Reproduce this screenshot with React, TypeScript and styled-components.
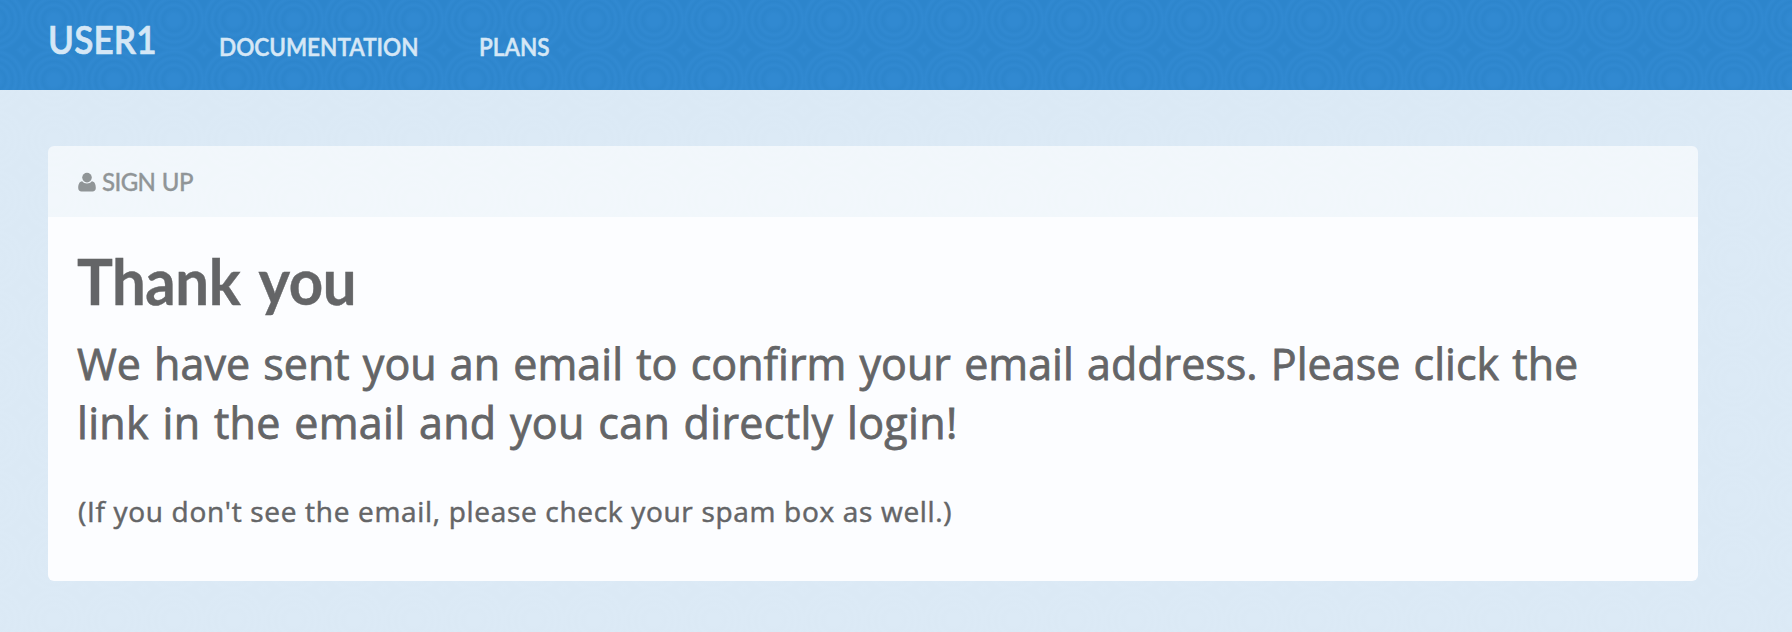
import React from "react";
import styled, { createGlobalStyle } from "styled-components";

const rings = (dark: string, light: string) =>
  `radial-gradient(circle at 30px 30px, ${light} 0 6px, ${dark} 11.5px, ${light} 15px, ${dark} 18.5px, ${light} 22px, ${dark} 25px, ${light} 28.5px, ${dark} 32px, ${dark} 36px, ${light} 39.5px, ${dark} 42.4px)`;

const GlobalStyle = createGlobalStyle`
  *, *::before, *::after { box-sizing: border-box; }
  body { margin: 0; }
`;

const Page = styled.div`
  min-height: 632px;
  background: ${rings("#dbe9f5", "#dceaf6")} 24px 50px / 60px 60px;
  color: #646567;
  font-family: "Open Sans", "Noto Sans", sans-serif;
`;

const Header = styled.header`
  height: 90px;
  padding-left: 48px;
  display: flex;
  align-items: flex-start;
  background: ${rings("#2d85cc", "#3189d1")} 24px 50px / 60px 60px;
  color: #d5e7f6;
  font-family: Lato, sans-serif;
  white-space: nowrap;
`;

const Brand = styled.a`
  width: 171px;
  font-size: 39px;
  font-weight: 600;
  line-height: 79px;
  letter-spacing: 0.2px;
  transform: scaleX(0.9);
  transform-origin: left;
  -webkit-text-stroke: 0.7px currentColor;
`;

const NavLink = styled.a<{ $width: number }>`
  width: ${(p) => p.$width}px;
  font-size: 24px;
  font-weight: 600;
  line-height: 94px;
  transform: scaleX(0.94);
  transform-origin: left;
  -webkit-text-stroke: 0.5px currentColor;
`;

const Card = styled.main`
  width: 1650px;
  height: 435px;
  margin: 56px 0 0 48px;
  border-radius: 6px;
  overflow: hidden;
`;

const CardHeader = styled.div`
  height: 71px;
  padding-left: 30px;
  display: flex;
  align-items: center;
  gap: 6px;
  background: rgba(255, 255, 255, 0.62);
  color: #909597;
  font-family: Lato, sans-serif;
  font-size: 24px;
  font-weight: 500;
  letter-spacing: -0.6px;
  word-spacing: 1px;
  -webkit-text-stroke: 0.3px currentColor;
`;

const CardBody = styled.div`
  height: 364px;
  padding: 29px 30px 0;
  background: #fcfdff;
`;

const Title = styled.h1`
  margin: 0 0 0 -1px;
  font-family: Lato, sans-serif;
  font-size: 64px;
  font-weight: 700;
  line-height: 70px;
  letter-spacing: -0.5px;
  word-spacing: 6px;
  transform: scaleX(0.937);
  transform-origin: left;
  white-space: nowrap;
  -webkit-text-stroke: 0.4px currentColor;
`;

const Lead = styled.p`
  margin: 18px 0 0 -1px;
  font-size: 43px;
  line-height: 59px;
  word-spacing: 2px;
  white-space: nowrap;
  -webkit-text-stroke: 0.8px currentColor;
`;

const Line = styled.span<{ $spacing: number }>`
  display: block;
  letter-spacing: ${(p) => p.$spacing}px;
`;

const Note = styled.p`
  margin: 39px 0 0;
  font-size: 28px;
  line-height: 40px;
  letter-spacing: 0.69px;
  white-space: nowrap;
  -webkit-text-stroke: 0.5px currentColor;
`;

const UserIcon = () => (
  <svg width="18" height="20" viewBox="0 0 18 20" fill="currentColor">
    <circle cx="9" cy="5.6" r="4.8" />
    <path d="M4.2 9.200C1.200 9.500 .2 12.500 .2 16c0 2 1.300 3.500 3.300 3.500h11c2 0 3.300-1.500 3.300-3.500 0-3.500-1-6.500-4-6.800C12.600 10.500 11 11.500 9 11.500S5.400 10.500 4.200 9.200z" />
  </svg>
);

export default function App() {
  return (
    <Page>
      <GlobalStyle />
      <Header>
        <Brand>USER1</Brand>
        <NavLink $width={260}>DOCUMENTATION</NavLink>
        <NavLink $width={80}>PLANS</NavLink>
      </Header>
      <Card>
        <CardHeader>
          <UserIcon />
          <span>SIGN UP</span>
        </CardHeader>
        <CardBody>
          <Title>Thank you</Title>
          <Lead>
            <Line $spacing={0.02}>
              We have sent you an email to confirm your email address. Please click the
            </Line>
            <Line $spacing={0.33}>link in the email and you can directly login!</Line>
          </Lead>
          <Note>(If you don't see the email, please check your spam box as well.)</Note>
        </CardBody>
      </Card>
    </Page>
  );
}
